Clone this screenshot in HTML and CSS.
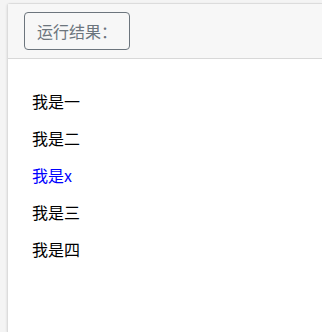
FILE: index.html
```html
<!DOCTYPE html>
<html lang="zh">
<head>
<meta charset="utf-8">
<link rel="stylesheet" href="styles.css">
</head>
<body>
<div class="card">
  <div class="card-header">
    <button class="btn">运行结果：</button>
  </div>
  <div class="card-body">
    <div class="item">我是一</div>
    <div class="item">我是二</div>
    <div class="item blue">我是x</div>
    <div class="item">我是三</div>
    <div class="item">我是四</div>
  </div>
</div>
</body>
</html>
```
FILE: styles.css
```css
html, body {
  margin: 0;
  padding: 0;
  background: #f4f4f4;
  font-family: "Noto Sans CJK SC", "Noto Sans", sans-serif;
  font-size: 16px;
  overflow: hidden;
}
body {
  padding: 3px 0 0 7px;
  height: 332px;
  box-sizing: border-box;
  display: flex;
}
.card {
  flex: 1;
  background: #fff;
  border: 1px solid #dcdcdc;
  border-right: none;
  border-bottom: none;
  border-radius: 4px 0 0 0;
  box-shadow: -1px 0 2px rgba(0,0,0,0.06);
}
.card-header {
  background: #f7f7f7;
  border-bottom: 1px solid #d8d8d8;
  padding: 8px 16px;
  display: flex;
}
.btn {
  font-family: inherit;
  font-size: 16px;
  line-height: 24px;
  height: 38px;
  padding: 6px 12px;
  color: #6c757d;
  background: transparent;
  border: 1px solid #6c757d;
  border-radius: 4px;
  margin: 0;
}
.card-body {
  padding: 24px 24px 0 24px;
}
.item {
  height: 37px;
  line-height: 37px;
  color: #000;
}
.blue {
  color: #0000ff;
}
```
